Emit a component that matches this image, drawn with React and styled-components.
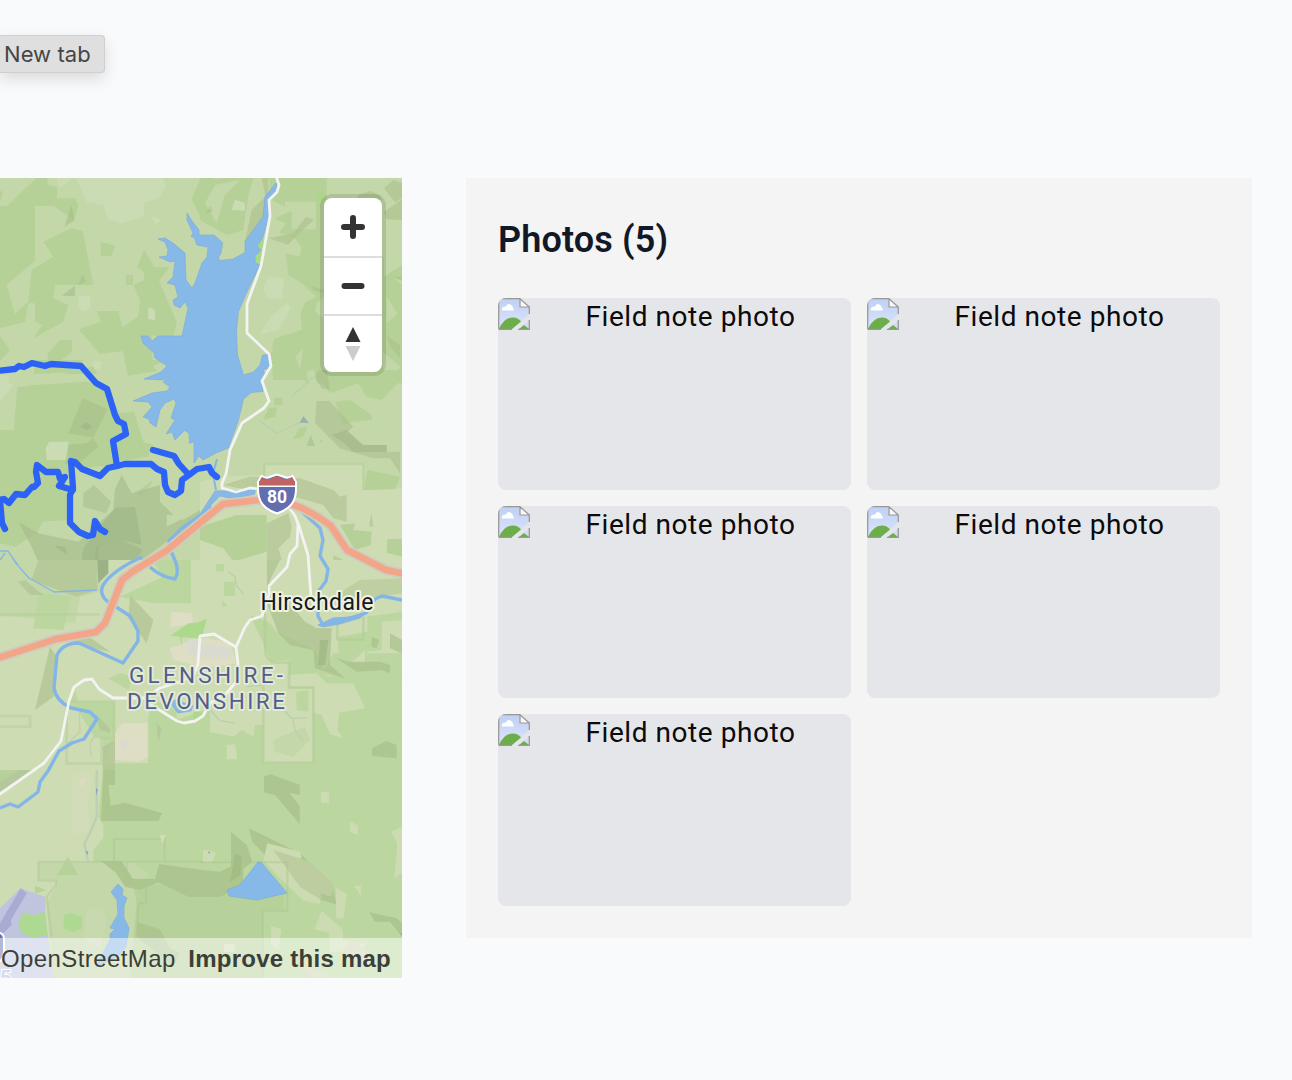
import React from "react";
import styled, { createGlobalStyle } from "styled-components";

const GlobalStyle = createGlobalStyle`
  * { box-sizing: border-box; }
  body { margin: 0; background: #f9fafc; font-family: Roboto, "Noto Sans", sans-serif; }
`;

const Page = styled.div`
  height: 1080px;
  overflow: hidden;
  background: #f9fafc;
`;
const Header = styled.header`
  height: 178px;
  padding-top: 35px;
`;
const TabHint = styled.div`
  width: 105px;
  height: 38px;
  padding-left: 4px;
  font-family: Inter, sans-serif;
  font-size: 22px;
  line-height: 37px;
  letter-spacing: 0.05px;
  color: #454545;
  white-space: nowrap;
  background: #dfdfdf;
  border: 1px solid #cfcfd0;
  border-left: 0;
  border-radius: 0 4px 4px 0;
  box-shadow: 0 6px 16px rgba(0, 0, 0, 0.13);
`;
const Main = styled.main`
  display: flex;
  align-items: flex-start;
  gap: 64px;
`;
const MapFrame = styled.section`
  position: relative;
  width: 402px;
  height: 800px;
  overflow: hidden;
`;
const MapCanvas = styled.svg`
  display: block;
  width: 402px;
  height: 800px;
`;
const Controls = styled.div`
  position: absolute;
  top: 20px;
  right: 20px;
  width: 58px;
  display: flex;
  flex-direction: column;
  border-radius: 8px;
  background: #fff;
  box-shadow: 0 0 0 4px rgba(0, 0, 0, 0.1);
`;
const Control = styled.button`
  display: flex;
  align-items: center;
  justify-content: center;
  height: 58px;
  padding: 0;
  border: 0;
  background: none;
  & + & { border-top: 2px solid #ddd; }
`;
const Attribution = styled.div`
  position: absolute;
  right: 0;
  bottom: 0;
  width: 402px;
  height: 40px;
  padding: 2px 11px 0 1px;
  display: flex;
  justify-content: space-between;
  align-items: center;
  background: rgba(255, 255, 255, 0.5);
  font: 24px/38px "Liberation Sans", Arial, sans-serif;
  color: #3b3f38;
  white-space: nowrap;
`;
const Source = styled.span`
  letter-spacing: 0.4px;
`;
const Improve = styled.b`
  letter-spacing: 0.25px;
`;
const Panel = styled.section`
  width: 786px;
  padding: 32px;
  background: #f4f4f4;
`;
const Title = styled.h2`
  margin: 0 0 30px;
  padding-top: 2px;
  font-size: 36px;
  line-height: 56px;
  font-weight: 600;
  letter-spacing: 0.15px;
  color: #111827;
`;
const Grid = styled.div`
  display: grid;
  grid-template-columns: 1fr 1fr;
  grid-auto-rows: 192px;
  gap: 16px;
`;
const Photo = styled.div`
  display: flex;
  border-radius: 8px;
  overflow: hidden;
  background: #e5e6ea;
`;
const Caption = styled.span`
  flex: 1;
  text-align: center;
  font-size: 28px;
  line-height: 38px;
  letter-spacing: 0.55px;
  color: #0b0b0b;
`;

const Tile = ({ x, y, children }) => (
  <g transform={`translate(${x} ${y}) scale(.33333)`}>{children}</g>
);

const BrokenImage = () => (
  <svg width="32" height="32" viewBox="0 0 32 32">
    <defs>
      <linearGradient id="sky" x1="0" y1="0" x2="0" y2="1">
        <stop offset="0" stopColor="#bfd0f3" />
        <stop offset="1" stopColor="#dce6fb" />
      </linearGradient>
    </defs>
    <path d="M.7.7H22L31.3 9V16L15 31.3H.7Z" fill="url(#sky)" />
    <path d="M1 31Q6 19.5 15 19.5Q20 19.5 23 23.5L14 31Z" fill="#6dad4a" />
    <path d="M4 12.5Q3 8.5 8 8.5Q10 4.5 13 7Q15 8 15 10Q17 12 15 12.5Z" fill="#fff" />
    <path d="M22 .7V9H31.3Z" fill="#f8f8f8" stroke="#999" strokeWidth="1.2" />
    <path d="M.7 31V.7H22M31.3 9V16M.7 31.3H14" fill="none" stroke="#999" strokeWidth="1.3" />
    <path d="M31.3 22V31.3H21Z" fill="#d0dcfa" />
    <path d="M26 27L31 31H21Z" fill="#6dad4a" />
    <path d="M31.3 22V31.3H20" fill="none" stroke="#999" strokeWidth="1.3" />
  </svg>
);

const Terrain = () => (
  <>
    <rect y="178" width="402" height="800" fill="#c3d7a9" />
    <Tile x={0} y={170}>
      <g fill="#b5d197">
        <path d="M110 24H142V44L171 50V85H225L235 105L222 150L162 108H105V272L20 345L44 432L85 395L95 300L160 260L130 215L215 175L248 183L280 345H165L160 385L205 405L190 455L100 505L126 465L105 455V400H85L75 455L0 475V108H20Z" />
        <path d="M0 62L9 66L2 90H0ZM0 498L30 540L0 572ZM143 552L180 510H216V545L185 570H143ZM292 423H355L367 472L414 440L420 390L400 345L432 330V305L411 292L433 240L463 292H508L477 333L530 455L520 497H455L458 590L473 602L390 616L368 543L300 552L236 478L302 456ZM603 24H640V112L600 138L574 86ZM378 315H399V345H378ZM302 215L346 227L334 258L303 257Z" />
      </g>
      <g fill="#cbdbb3">
        <path d="M228 24H488L497 50L475 86L432 97V140L365 161L323 148L312 106L260 96ZM170 24H220L180 53L171 38ZM455 140L488 150L465 162ZM236 378H270V415L255 424L236 415ZM445 412L465 420V452L444 446ZM278 573H302V598H278Z" />
      </g>
      <path d="M214 105L224 150L194 170ZM248 313L258 333L235 346ZM185 377L225 347V378Z" fill="#aac18c" opacity=".7" />
    </Tile>
    <Tile x={200} y={170}>
      <g fill="#b5d197">
        <path d="M0 30L80 24H160L145 75L130 180L80 195L0 150ZM210 24H606V370L545 420L510 385V300L440 350L420 560L606 640V24ZM210 24H380V630H220L212 550L230 480L270 492L305 478L300 405L350 380L300 335L262 315L255 250H302V225L265 195L226 190L250 158L225 145L280 120H347V95H255V110L210 88Z" />
        <path d="M350 260H606V420H350ZM330 480H606V640H320L285 575L307 532Z" />
      </g>
      <g fill="#c3d7a9">
        <path d="M15 100L45 45L120 30L75 75L50 160ZM275 97H348V178H275ZM218 145L258 160L238 190L285 205L305 235L298 260L257 250L265 315L300 340L290 345L330 370L290 450L309 477L270 490L215 510L218 548L145 490V405ZM452 43H520V85H450ZM552 180H606V285L552 320ZM560 380L592 430L560 460ZM310 535L300 598L286 560ZM350 400L380 375V450L345 425ZM605 345L580 322L606 330Z" />
        <path d="M320 605L342 597L350 640H325ZM548 545L600 590L585 630H550Z" />
      </g>
      <path d="M260 400L272 415L235 480L178 495L212 440ZM205 318L252 328L248 385L204 388L190 355ZM95 120L105 89L135 99V122Z" fill="#cbdbb3" />
      <path d="M205 205L228 200L280 190L318 140L342 150L310 178L264 224ZM475 75L510 63L540 75L545 90H470ZM552 55L580 30L606 40V85L585 97ZM552 125L606 88V150L560 148ZM332 347L372 360V370L340 360ZM560 498L600 525V565L572 532ZM143 240L205 120L185 24H205V80L195 80L155 120L135 215ZM15 130L32 108L38 125ZM603 320L606 333L580 322Z" fill="#a9bd89" opacity=".55" />
      <path d="M347 75L365 68L375 80L360 100ZM172 228L190 195V225L185 240L190 285L163 280V258Z" fill="#a9d889" />
    </Tile>
    <Tile x={0} y={360}>
      <g fill="#b5d197">
        <path d="M52 82L102 75L105 55L260 45L320 80L370 185L345 245L350 315L230 325L140 290L138 255L205 250V220L250 115L320 150L280 235L222 330L195 360L110 520L45 560L0 550V232L41 210ZM102 42V0H250L230 35ZM373 0L385 48L490 5V0ZM342 160L402 155L430 245L458 255L445 290L345 305ZM405 400L460 360L452 375L425 405Z" />
        <path d="M0 210H200V480L60 490L0 540ZM280 20L300 60L250 115L205 220L140 250V120L100 75L170 45Z" />
      </g>
      <path d="M0 45L30 45L25 70L42 75L0 125ZM148 245L205 245V300H140L137 263Z" fill="#cbdbb3" />
      <path d="M102 42H300L310 80L260 65L102 75Z" fill="#c3d7a9" />
      <g fill="#a6bd8a">
        <path d="M248 115L323 148L280 233L205 220ZM205 255L260 250L280 235L295 260L220 325L195 310ZM250 400L282 375L333 425L318 460L250 440Z" opacity=".55" />
        <path d="M55 485L115 520L235 545L340 450L345 388L365 345L395 400L480 375V425L520 465L550 480L600 450L630 390V480L520 530L385 630H125L95 560Z" opacity=".65" />
        <path d="M345 445L405 440L425 555L365 540L295 560V630H242L250 565L290 510Z" fill="#8ea87a" opacity=".35" />
        <path d="M290 560L365 540L430 570L380 630H280Z" fill="#899f76" opacity=".25" />
        <path d="M240 200L260 187L278 202L262 210ZM163 558L195 560L202 585Z" fill="#90a778" opacity=".35" />
      </g>
      <path d="M500 465H570L500 500Z" fill="#c3d7a9" />
    </Tile>
    <Tile x={200} y={370}>
      <path d="M0 335L65 320L195 315V280H490V360L606 355V640H0Z" fill="#cddcb3" />
      <g fill="#b5d197">
        <path d="M340 0H606V25L545 90L500 80L475 40L390 70ZM405 95L450 90L515 135V150L460 155L430 165ZM222 83H247V105H222ZM205 115L233 112L225 140L190 150ZM280 208L298 174L322 170L310 200ZM503 300L600 320L585 358L492 360ZM0 470L110 435H200V545L100 575L70 535L0 510ZM420 465L465 460L460 480L515 485L512 525L465 540ZM562 507H606V560L560 548ZM400 555L460 585L435 630H400ZM48 583H72V603H48Z" />
      </g>
      <g fill="#a7ba8a">
        <path d="M350 93H388L460 170L435 190L490 225H560V245H600V310L570 265L520 265L420 235L345 160ZM355 0H380L390 60L365 55L345 20Z" opacity=".5" />
        <path d="M396 194L440 180L490 225H560V246H460L440 225Z" opacity=".8" />
        <path d="M70 345L150 320L300 325L400 360L420 380L440 375V455L400 445L370 405L250 370L145 360ZM201 460L265 430L275 470L270 500L235 535L250 590L240 640H201ZM515 430L520 470L507 468Z" opacity=".5" />
        <path d="M175 150L230 190L300 157M275 80L340 20" fill="none" stroke="#b9d0ae" strokeWidth="4" />
      </g>
      <path d="M299 158L310 139L327 159ZM362 213L366 209L365 216Z" fill="#7899b2" opacity=".6" />
      <path d="M332 195L345 228H320Z" fill="#93ae86" opacity=".4" />
      <path d="M193 330V282H490V360" fill="none" stroke="#b6d198" strokeWidth="7" opacity=".7" />
    </Tile>
    <Tile x={0} y={560}>
      <path d="M0 0H1206V1270H0Z" fill="#cddcb3" />
      <path d="M0 0H300V95L240 110L225 190L0 165Z" fill="#c3d7a9" />
      <g fill="#bbd69f">
        <path d="M120 100L215 110L190 210L100 205ZM360 110L490 50L455 0H573V130H460ZM360 340L400 350L385 390L325 355ZM0 165L210 160L200 170L0 169ZM225 390L235 425H345V535L310 610H630V1250H310V1120L330 1080L310 1020V535H285L230 445L205 440ZM460 420L530 450V480L630 445V610H445V470Z" />
      </g>
      <g fill="#b0c494">
        <path d="M55 65L75 60L130 105H90ZM115 0H292V90L230 110L160 85L95 60ZM150 260L170 290L160 410L105 450ZM175 230L260 225L330 275L260 260ZM390 105L460 180L440 250L385 175ZM285 460L330 505V518L300 510ZM470 490L485 505L475 545ZM308 560L345 540V632H308Z" opacity=".75" />
        <path d="M292 0H325V40L295 70Z" fill="#9bb285" />
        <path d="M0 468H90V500H0M200 445V610H305V535H342V425H215M0 163H300" fill="none" stroke="#b6ce9b" strokeWidth="8" opacity=".55" />
      </g>
      <path d="M515 155L575 160L580 195L510 200ZM365 490H443V590L420 605L345 600V520ZM510 265L600 235H630L635 310L600 320L520 300Z" fill="#dedec5" />
      <path d="M565 238H630V285H565ZM357 543H390L372 580Z" fill="#dadbd0" />
      <path d="M512 227L565 190L590 188L620 177L605 235L545 232V260L540 230ZM580 455H605L600 475H580Z" fill="#acd98c" />
      <path d="M238 455L240 515L205 550M285 525L270 550L273 590" fill="none" stroke="#bdd1ac" strokeWidth="4" />
    </Tile>
    <Tile x={200} y={560}>
      <g fill="#bbd69f">
        <path d="M150 165L205 185L235 220L345 270L375 340L400 370L490 375V445L420 460L410 520L385 510L365 460L342 455V385H267V300L215 305L190 250ZM415 230L502 215V170L606 155V180L545 185V270L500 275L495 310H450L415 290ZM400 280H606V610H340V430L420 450L495 445L460 375L370 340ZM0 510L100 530L125 510L160 530L165 495H190V635H0ZM48 12H72V34H48ZM72 66H105V108H72ZM70 122L82 138L63 140ZM288 395L325 390V455L290 450Z" />
        <path d="M606 120V380H590V405H606V640H120V610H340V350H606Z" />
      </g>
      <path d="M350 340L380 370H460L495 445L418 458L412 510L430 535L390 522L365 465L340 458V380H270L260 345ZM450 310L495 270V310ZM80 555L105 553L112 598H80Z" fill="#cddcb3" />
      <path d="M220 540L315 500L330 540L280 590L225 575Z" fill="#c3d7a9" />
      <path d="M0 235L90 245L110 310L0 325Z" fill="#dedec5" />
      <path d="M0 250L95 265V292H0Z" fill="#dadbd0" />
      <g fill="#a7bd89">
        <path d="M201 0H240L210 60L205 130L250 110L315 185L350 205H395L390 315L435 355L345 325L340 270L270 255L235 220L201 130ZM410 295L445 305L540 305L570 315V340L545 330L470 335ZM515 230L537 240L530 265L515 260ZM570 220L606 240V280L570 265ZM516 565L560 543L590 555V595L516 588Z" opacity=".65" />
        <path d="M440 85L480 60L606 55V100L530 110L400 120Z" opacity=".4" />
        <path d="M360 240H385L375 315H355Z" fill="#8da777" opacity=".4" />
      </g>
      <path d="M195 160V270Q200 305 225 308H267V383H340V608H190V380M412 185V238H490V160" fill="none" stroke="#b0ca94" strokeWidth="8" opacity=".5" />
      <path d="M85 35L105 50L108 75L130 102M30 450L60 482L105 490M140 380L200 375M240 440L275 475L320 473M278 475L285 510L310 545" fill="none" stroke="#b9d0ae" strokeWidth="4" />
    </Tile>
    <Tile x={0} y={770}>
      <path d="M308 0H1206V630H280V240L323 187L295 140Z" fill="#bbd69f" />
      <path d="M115 275H400L445 310L435 400L410 410L385 630H160L140 400L168 350V330H115Z" fill="#c3d7a9" />
      <path d="M400 345H850V420H790V630H390L410 400Z" fill="#b6d199" />
      <g fill="#adc58e">
        <path d="M310 0H345V45H325L332 107L375 98L487 130L475 153H303ZM303 273H365L398 326L465 327L478 282L606 300L660 305L730 270V345L660 380H565L475 337L420 360L375 350L350 310Z" />
        <path d="M412 457L480 478L510 535L540 550L520 590L410 500Z" />
      </g>
      <path d="M115 275H645M115 275V332H168V345L140 380L155 500M342 275V207H494V275M380 275V340H438V400H415L410 500" fill="none" stroke="#a9c28b" strokeWidth="6" opacity=".4" />
      <path d="M203 260L235 315H171ZM105 347L138 360L105 372ZM0 0H105L0 55Z" fill="#b6d199" />
      <path d="M0 35L60 0H100L0 65Z" fill="#b5c89b" />
      <path d="M216 20L250 0L280 18L262 100L270 180L216 195ZM478 195H497L487 222Z" fill="#d3dcb9" />
      <path d="M262 415H305L320 450L300 530L250 500Z" fill="#c9d9af" />
      <path d="M237 27H257L247 55Z" fill="#e0dac5" />
      <path d="M290 0V140L270 190L253 220L264 275" fill="none" stroke="#bdcfb5" strokeWidth="7" />
      <path d="M0 415L62 355L137 382L135 430L160 625H0Z" fill="#bfc4df" />
      <path d="M0 460L62 355L80 370L33 450L35 465L0 500Z" fill="#a9abd2" />
      <path d="M67 430L100 435L135 427L142 495L100 503L65 490L55 463ZM193 435L212 428L246 440V475L220 487L190 475Z" fill="#add991" />
      <path d="M288 55L293 58L289 78ZM257 242L265 245L262 255Z" fill="#7d9fc3" />
    </Tile>
    <Tile x={200} y={770}>
      <path d="M192 20L210 12L299 45V75L268 68L299 108V162L225 75L192 67ZM93 185L140 225L157 275L125 300L85 335L93 285ZM147 175L300 250L398 345L408 402L360 388L260 300L205 265L157 215ZM508 427L590 445L606 460V500L570 455H525Z" fill="#adc58e" />
      <path d="M105 250L125 260L122 315L90 335Z" fill="#9fb681" opacity=".6" />
      <path d="M363 66H387V98H363ZM450 153L474 167V195L450 187ZM573 185L606 170V310L583 325L592 220ZM462 348H483V377ZM408 353L440 372L430 447L408 443ZM365 423L428 478L430 510L502 520L480 545H390L388 488L343 478ZM213 468L245 478L235 540L213 525ZM72 522H104V545H72ZM190 270L202 220L300 245L305 262L270 290L360 385V402L310 392L235 320ZM10 240H30L47 250L38 278L8 276Z" fill="#ccdbb1" />
      <path d="M220 240L330 275L398 340V375L360 388L300 350L260 295Z" fill="#bdcda0" />
      <path d="M362 370L405 385L408 402L365 390Z" fill="#adc58e" />
      <path d="M430 540L455 510L510 550V590L460 580ZM290 580L380 610V625H340Z" fill="#cad3af" />
      <path d="M0 277H262V422H188V625" fill="none" stroke="#a9c28b" strokeWidth="6" opacity=".4" />
      <path d="M24 246L31 244L28 252ZM601 492L606 490V496Z" fill="#7d9fc3" />
    </Tile>
  </>
);

const Water = () => (
  <g fill="#87b9e8" stroke="#7aa8dc" strokeWidth=".6">
    <path d="M187 213L192 221L199 230V235H214L222.7 242.7L221 253L218.5 257L219.5 260.5L233 259L245 252.5V241.5L263 216.5L265 196.5L276 183L278 191L268.5 200L269 216.5L263 237L257 246L261 250L255 256V263L260 265L246.5 293L238.5 311.5L236.5 331.5L237.5 355L243.5 375L253.5 372L260 365L262.5 355L268.5 354.5L271 367L263 370L265 374L261.5 381.5L263 391.5L251.5 392.5L243.5 399L238.5 420L228.5 448L217 452.5L203 460L199 456L194 463V441.5L189.5 443.5L189 433L184.5 430.5L175 440L172 432L166 434L175 420L171 418L176 403L174 399L165 403L160 410L156 427L150 423L149 419L143 417L152 407L148 402L133 401L152 393L167 391L170 387L163 382L171 375L163 380L144 379L161 372L167 366L155 358L154 353L143 343L141 336L148 336L152 341L158 336H182L188 308L185 302L180 308L174 305L173 300L178 297L175 285L167 283L173 277L175 261L170 262L159 257L167 256L168 250L165 242L158 239L165 238L173 243L185 253L186 280L192 288L195 283L202 263L207 257L208 247L197 245L194 237L191 237L193 233L187 220Z" />
    <path d="M227 890L240 885L258 862L261 862L287 893L257 900L229 896Z" />
    <path d="M118 884L123 889L122 895L127 898L124 906V918L129 928L126 947L119 955L96 967L105 949L110 940V934L115 929L110 928L118 914L117 900L111 892Z" />
    <path d="M215 491L255 490V494L234 499L220 496L207 509L200 514ZM318 625L333 618L350 617L366 613L360 618L340 624L323 627Z" />
    <path d="M170 703L175 700L193 706L191 711L178 713Z" />
    <g fill="none" stroke="#83b6e6" strokeWidth="3.4" strokeLinejoin="round">
      <path d="M212 507L181 529L169 541L171 551L176 563Q179 574 175 579Q161 577 150 567" />
      <path d="M217 459L213 474L216 490" strokeWidth="2" />
      <path d="M142 557Q113 570 103 585Q99 594 107 601L130 616L138 631V641L123 663L79 643Q63 643 57 655L54 688Q56 701 71 708L90 712L97 719L84 739L72 743L59 751L48 771L40 782L38 792L18 807L10 804L0 808" />
      <path d="M292 503L320 528L323 540L320 556L328 569L326 581L318 592V616L323 625L350 618L366 613L375 599L382 596L402 600" />
      <path d="M5 553L0 560M0 551L8 551L20 568L29 578L54 592L97 590M8 551L17 565" strokeWidth="1.3" />
    </g>
  </g>
);

const Roads = () => (
  <g fill="none" strokeLinecap="round" strokeLinejoin="round">
    <g stroke="#f3f3f2" strokeWidth="2.8">
      <path d="M276 176L279 185L277 192L269 200L270 216L261 266L247 304V333L269 354L271 366L262 381L269 401L264 408L242 423L230 450L226 474L222 483V488L236 492L250 488L278 491L295 516L299 526L308 555L311 597" />
      <path d="M298 524L297 546L290 554L287 567L269 586V594L262 616L250 620L245 627L236 647L238 664L236 682L225 695L210 703L203 716L195 721L184 723L177 721L150 704L145 698H113L99 689L92 679L84 680L74 687L69 701L61 741L44 763L0 794" />
      <path d="M236 647L214 634L200 636L198 664L194 674L182 681L160 688L145 698" />
    </g>
    <path d="M-5 659L56 639L96 632L105 623L122 580L132 572L166 551L223 504L268 499Q300 502 331 526L347 550L386 570L405 574" stroke="#d0cbbf" strokeWidth="10" />
    <path d="M-5 659L56 639L96 632L105 623L122 580L132 572L166 551L223 504L268 499Q300 502 331 526L347 550L386 570L405 574" stroke="#f2a587" strokeWidth="6.5" />
    <g stroke="#2c62f6" strokeWidth="6.3">
      <path d="M-3 371L15 369L19 366L24 367L32 363L45 366L51 364L81 366L96 383L107 389L115 415L118 421L124 424L126 434L113 441L117 466" />
      <path d="M153 450L174 456L179 464L189 475L197 469L209 467L212 473L217 477M189 475L182 480L181 491L175 495L168 492L165 485L164 472L157 469L151 464H125L117 466L108 468L100 476L82 469L75 462L71 461L73 488L70 495V523L79 532L88 536L93 535L95 521L100 529L105 532" />
      <path d="M-2 500L4 499L9 503L16 494L25 495L32 487H34L38 483L36 472L37 465L46 472H58L60 479L65 477L59 486L73 490M0 500L2 523L5 529" />
    </g>
  </g>
);

const Labels = () => (
  <>
    <g transform="translate(252 470)">
      <path d="M9.5 6Q14 9 19 6.5L25 4.5L31 6.5Q36 9 40.5 6L44 12V19C44 32 38 39 25 43.5C12 39 6 32 6 19V12Z" fill="#626eaf" stroke="#fff" strokeWidth="2" />
      <path d="M10 7Q15 11 20 8L25 6L30 8Q35 11 40 7L43 12V15.5H7V12Z" fill="#be6464" />
      <path d="M7 16.3H43" stroke="#fff" strokeWidth="1.5" />
      <text x="25" y="33" textAnchor="middle" fontFamily="Roboto, sans-serif" fontSize="17.5" fontWeight="700" fill="#fff" textLength="20">80</text>
    </g>
    <g fontFamily="Roboto, sans-serif" fontSize="23" paintOrder="stroke" strokeLinejoin="round">
      <text x="260.5" y="610" fill="#15181b" stroke="#edf2e1" strokeWidth="4" textLength="113">Hirschdale</text>
      <g fill="#535d8c" stroke="#e2ead3" strokeWidth="4" fontSize="22.5">
        <text x="129" y="683" textLength="154">GLENSHIRE-</text>
        <text x="127" y="709" textLength="158">DEVONSHIRE</text>
      </g>
    </g>
    <path d="M-8 933H0Q4 934 4 940V950Q4 960-4 965H-8Z" fill="#6671b0" stroke="#fff" strokeWidth="2" />
    <text x="0" y="985" fontFamily="Roboto, sans-serif" fontSize="20" fontWeight="700" fill="#aeb2da" stroke="#fff" strokeWidth="2" paintOrder="stroke">5</text>
  </>
);

export default function App() {
  return (
    <Page>
      <GlobalStyle />
      <Header>
        <TabHint>New tab</TabHint>
      </Header>
      <Main>
        <MapFrame>
          <MapCanvas viewBox="0 178 402 800">
            <Terrain />
            <Water />
            <Roads />
            <Labels />
          </MapCanvas>
          <Controls>
            <Control aria-label="Zoom in">
              <svg width="26" height="26" viewBox="0 0 26 26">
                <path d="M4 13H22M13 4V22" stroke="#333" strokeWidth="6" strokeLinecap="round" />
              </svg>
            </Control>
            <Control aria-label="Zoom out">
              <svg width="26" height="26" viewBox="0 0 26 26">
                <path d="M4.5 13H21.5" stroke="#333" strokeWidth="6" strokeLinecap="round" />
              </svg>
            </Control>
            <Control aria-label="Reset bearing">
              <svg width="16" height="34" viewBox="0 0 16 34">
                <path d="M8 0L15.5 15H.5Z" fill="#333" />
                <path d="M.5 19H15.5L8 34Z" fill="#ccc" />
              </svg>
            </Control>
          </Controls>
          <Attribution>
            <Source>OpenStreetMap</Source>
            <Improve>Improve this map</Improve>
          </Attribution>
        </MapFrame>
        <Panel>
          <Title>Photos (5)</Title>
          <Grid>
            {[1, 2, 3, 4, 5].map((id) => (
              <Photo key={id}>
                <BrokenImage />
                <Caption>Field note photo</Caption>
              </Photo>
            ))}
          </Grid>
        </Panel>
      </Main>
    </Page>
  );
}
